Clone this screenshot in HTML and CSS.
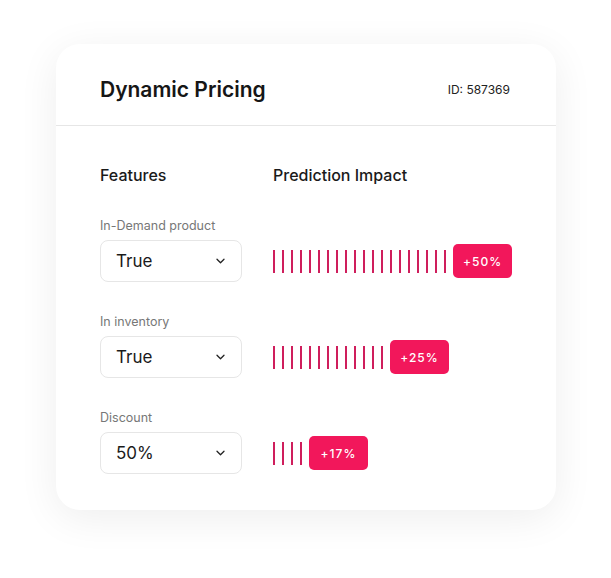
FILE: index.html
```html
<!DOCTYPE html>
<html lang="en">
<head>
  <meta charset="UTF-8">
  <meta name="viewport" content="width=device-width, initial-scale=1.0">
  <title>Dynamic Pricing</title>
  <link rel="stylesheet" href="styles.css">
</head>
<body>
  <div class="card">
    <header class="card-head">
      <h1>Dynamic Pricing</h1>
      <span class="model-id">ID: 587369</span>
    </header>
    <div class="card-body">
      <div class="col-title">Features</div>
      <div class="col-title">Prediction Impact</div>

      <div class="feature">
        <label>In-Demand product</label>
        <div class="select">True
          <svg width="9" height="6" viewBox="0 0 9 6"><path d="M1 1.2l3.5 3.5 3.5-3.5" fill="none" stroke="#222" stroke-width="1.3" stroke-linecap="round" stroke-linejoin="round"/></svg>
        </div>
      </div>
      <div class="impact" data-bars="20"><span class="badge">+50%</span></div>

      <div class="feature">
        <label>In inventory</label>
        <div class="select">True
          <svg width="9" height="6" viewBox="0 0 9 6"><path d="M1 1.2l3.5 3.5 3.5-3.5" fill="none" stroke="#222" stroke-width="1.3" stroke-linecap="round" stroke-linejoin="round"/></svg>
        </div>
      </div>
      <div class="impact" data-bars="13"><span class="badge">+25%</span></div>

      <div class="feature">
        <label>Discount</label>
        <div class="select">50%
          <svg width="9" height="6" viewBox="0 0 9 6"><path d="M1 1.2l3.5 3.5 3.5-3.5" fill="none" stroke="#222" stroke-width="1.3" stroke-linecap="round" stroke-linejoin="round"/></svg>
        </div>
      </div>
      <div class="impact" data-bars="4"><span class="badge">+17%</span></div>
    </div>
  </div>
  <script>
    document.querySelectorAll('.impact').forEach(el => {
      const n = parseInt(el.dataset.bars);
      const bars = document.createElement('div');
      bars.className = 'bars';
      for (let i = 0; i < n; i++) {
        bars.appendChild(document.createElement('i'));
      }
      el.prepend(bars);
    });
  </script>
</body>
</html>
```

FILE: styles.css
```css
body {
  margin: 0;
  padding: 0 0 60px 0;
  background-color: #fff;
  font-family: 'Inter', 'Noto Sans', sans-serif;
  color: #1c1c1c;
}
.card {
  margin: 44px 0 0 56px;
  width: 500px;
  height: 466px;
  background-color: #fff;
  border-radius: 24px;
  box-shadow: 0 8px 40px rgba(0,0,0,0.07);
  box-sizing: border-box;
}
.card-head {
  height: 82px;
  padding: 10px 46px 0 44px;
  box-sizing: border-box;
  display: flex;
  align-items: center;
  justify-content: space-between;
  border-bottom: 1px solid #e6e6e6;
}
.card-head h1 {
  margin: 0;
  font-size: 21px;
  font-weight: 600;
  color: #161616;
}
.model-id {
  font-size: 12px;
  color: #222;
}
.card-body {
  padding: 39px 44px 0 44px;
  display: grid;
  grid-template-columns: 142px auto;
  column-gap: 31px;
  row-gap: 32px;
}
.col-title {
  font-size: 16px;
  line-height: 20px;
  font-weight: 500;
  color: #1a1a1a;
  margin-bottom: 1px;
}
.feature label {
  display: block;
  font-size: 12.5px;
  line-height: 16px;
  color: #777;
  margin-bottom: 6px;
}
.select {
  height: 42px;
  box-sizing: border-box;
  border: 1px solid #e6e6e6;
  border-radius: 8px;
  padding: 0 16px 0 15px;
  display: flex;
  align-items: center;
  justify-content: space-between;
  font-size: 17px;
  color: #1a1a1a;
}
.impact {
  align-self: end;
  height: 42px;
  display: flex;
  align-items: center;
  gap: 7px;
}
.bars {
  display: flex;
  gap: 7px;
}
.bars i {
  display: block;
  width: 2px;
  height: 23px;
  background-color: #cf1e5c;
}
.badge {
  width: 59px;
  height: 34px;
  border-radius: 5px;
  background-color: #f2175b;
  color: #fff;
  font-size: 12px;
  font-weight: 500;
  letter-spacing: 1px;
  display: flex;
  align-items: center;
  justify-content: center;
}
```
